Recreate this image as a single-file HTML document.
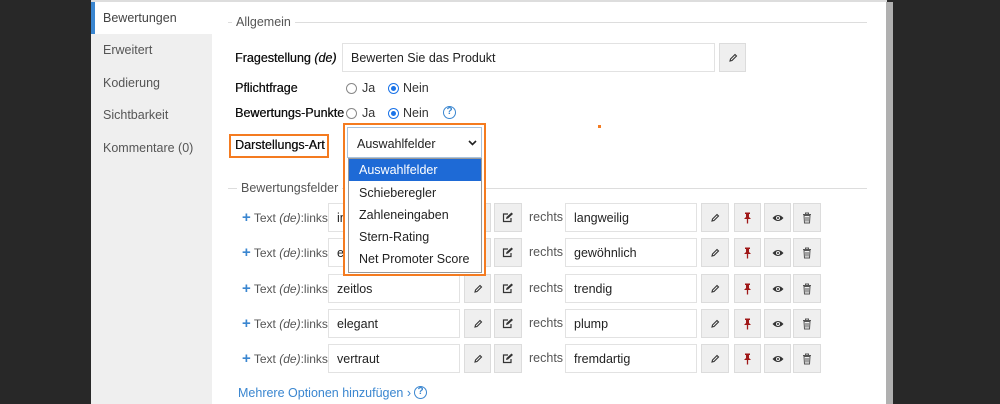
<!DOCTYPE html>
<html><head><meta charset="utf-8"><style>
*{box-sizing:border-box;margin:0;padding:0}
body{width:1000px;height:404px;background:#282828;position:relative;overflow:hidden;font-family:"Liberation Sans",sans-serif;font-size:12.5px;color:#333}
.a{position:absolute}
.t{position:absolute;white-space:nowrap;line-height:16px}
.inp{position:absolute;background:#fff;border:1px solid #e2e2e2;padding-left:8px;line-height:29px;height:29px;white-space:nowrap;color:#222;overflow:hidden}
.btn{position:absolute;background:#efefef;border:1px solid #dcdcdc;height:29px;display:flex;align-items:center;justify-content:center}
.side{position:absolute;left:103px;color:#555;font-size:12.5px}
.lg{position:absolute;color:#555;background:#fff;padding:0 4px;line-height:16px}
.radio{position:absolute;width:11px;height:11px;border:1px solid #888;border-radius:50%;background:#fff}
.radio.on{border:1px solid #1a73e8}
.radio.on::after{content:"";position:absolute;left:2px;top:2px;width:5px;height:5px;border-radius:50%;background:#1a73e8}
.help{position:absolute;width:13px;height:13px;border:1.5px solid #3a86d0;border-radius:50%;color:#3a86d0;font-size:10px;font-weight:bold;line-height:10px;text-align:center}
.opt{position:absolute;left:349px;width:132px;height:22px;line-height:22px;padding-left:10px;color:#222}
.row{position:absolute;left:0;width:1000px;height:29px}
.row .lbl{position:absolute;left:242px;top:7px;white-space:nowrap;color:#555;line-height:16px;font-size:12px}
.row .lbl b{color:#3a86d0;font-size:15px}
.lab{color:#111;font-size:12.5px;text-shadow:0.3px 0 0 #111}
</style></head><body>
<div class="a" style="left:91px;top:2px;width:796px;height:402px;background:#fff"></div>
<div class="a" style="left:91px;top:0;width:796px;height:2px;background:#ddd"></div>
<div class="a" style="left:886px;top:2px;width:7px;height:402px;background:#b0b0b0"></div>
<div class="a" style="left:91px;top:34px;width:121px;height:370px;background:#efefef"></div>
<div class="a" style="left:91px;top:2px;width:4px;height:32px;background:#3a86d0"></div>
<div class="side t" style="top:10px;color:#444">Bewertungen</div>
<div class="side t" style="top:42px">Erweitert</div>
<div class="side t" style="top:75px">Kodierung</div>
<div class="side t" style="top:107px">Sichtbarkeit</div>
<div class="side t" style="top:140px">Kommentare (0)</div>

<div class="a" style="left:228px;top:22px;width:639px;height:1px;background:#ddd"></div>
<div class="lg" style="left:232px;top:14px">Allgemein</div>

<div class="t lab" style="left:235px;top:50px">Fragestellung <i>(de)</i></div>
<div class="inp" style="left:342px;top:43px;width:373px">Bewerten Sie das Produkt</div>
<div class="btn" style="left:719px;top:43px;width:27px">
<svg width="10" height="10" viewBox="0 0 10 10"><path d="M2 8 L2.5 6 L7 1.5 L8.5 3 L4 7.5 Z" fill="none" stroke="#333" stroke-width="1.1"/></svg></div>

<div class="t lab" style="left:235px;top:80px">Pflichtfrage</div>
<div class="radio" style="left:346px;top:83px"></div><div class="t" style="left:362px;top:80px">Ja</div>
<div class="radio on" style="left:388px;top:83px"></div><div class="t" style="left:403px;top:80px">Nein</div>

<div class="t lab" style="left:235px;top:105px">Bewertungs-Punkte</div>
<div class="radio" style="left:346px;top:108px"></div><div class="t" style="left:362px;top:105px">Ja</div>
<div class="radio on" style="left:388px;top:108px"></div><div class="t" style="left:403px;top:105px">Nein</div>
<div class="help" style="left:443px;top:106px">?</div>

<div class="a" style="left:229px;top:134px;width:100px;height:24px;border:2px solid #f47b20"></div>
<div class="t lab" style="left:235px;top:137px">Darstellungs-Art</div>

<div class="a" style="left:598px;top:125px;width:3px;height:3px;background:#f47b20"></div>

<div class="a" style="left:228px;top:188px;width:639px;height:1px;background:#ddd"></div>
<div class="lg" style="left:237px;top:180px">Bewertungsfelder</div>

<div class="row" style="top:203px">
<div class="lbl"><b>+</b> Text <i>(de)</i>:links</div>
<div class="inp" style="left:328px;top:0;width:132px">interessant</div>
<div class="btn" style="left:464px;top:0;width:27px"><svg width="10" height="10" viewBox="0 0 10 10"><path d="M2 8 L2.5 6 L7 1.5 L8.5 3 L4 7.5 Z" fill="none" stroke="#333" stroke-width="1.1"/></svg></div>
<div class="btn" style="left:494px;top:0;width:28px"><svg width="12" height="11" viewBox="0 0 12 11"><path d="M9 6 V9.5 H1.5 V2 H6" fill="none" stroke="#333" stroke-width="1.2"/><path d="M4 7 L4.5 5 L9.5 0.5 L11 2 L6 6.5 Z" fill="#333"/></svg></div>
<div class="t" style="left:529px;top:6px;color:#555">rechts</div>
<div class="inp" style="left:565px;top:0;width:132px">langweilig</div>
<div class="btn" style="left:701px;top:0;width:28px"><svg width="10" height="10" viewBox="0 0 10 10"><path d="M2 8 L2.5 6 L7 1.5 L8.5 3 L4 7.5 Z" fill="none" stroke="#333" stroke-width="1.1"/></svg></div>
<div class="btn" style="left:734px;top:0;width:27px"><svg width="9" height="12" viewBox="0 0 9 12"><path d="M2 0.5 H7 V2 H6 V5 L8 7 H1 L3 5 V2 H2 Z" fill="#a01818"/><path d="M4.5 7 V11.5" stroke="#a01818" stroke-width="1.3"/></svg></div>
<div class="btn" style="left:764px;top:0;width:27px"><svg width="12" height="8" viewBox="0 0 12 8"><path d="M0.5 4 Q6 -2 11.5 4 Q6 10 0.5 4 Z" fill="#333"/><circle cx="6" cy="4" r="2" fill="#efefef"/><circle cx="6" cy="4" r="1" fill="#333"/></svg></div>
<div class="btn" style="left:793px;top:0;width:28px"><svg width="10" height="12" viewBox="0 0 10 12"><path d="M1 2.5 H9 M3.5 2.5 V1 H6.5 V2.5 M2 3.5 L2.5 11 H7.5 L8 3.5 Z M4 5 V9.5 M6 5 V9.5" fill="none" stroke="#555" stroke-width="1"/></svg></div>
</div>

<div class="row" style="top:238px">
<div class="lbl"><b>+</b> Text <i>(de)</i>:links</div>
<div class="inp" style="left:328px;top:0;width:132px">extravagant</div>
<div class="btn" style="left:464px;top:0;width:27px"><svg width="10" height="10" viewBox="0 0 10 10"><path d="M2 8 L2.5 6 L7 1.5 L8.5 3 L4 7.5 Z" fill="none" stroke="#333" stroke-width="1.1"/></svg></div>
<div class="btn" style="left:494px;top:0;width:28px"><svg width="12" height="11" viewBox="0 0 12 11"><path d="M9 6 V9.5 H1.5 V2 H6" fill="none" stroke="#333" stroke-width="1.2"/><path d="M4 7 L4.5 5 L9.5 0.5 L11 2 L6 6.5 Z" fill="#333"/></svg></div>
<div class="t" style="left:529px;top:6px;color:#555">rechts</div>
<div class="inp" style="left:565px;top:0;width:132px">gewöhnlich</div>
<div class="btn" style="left:701px;top:0;width:28px"><svg width="10" height="10" viewBox="0 0 10 10"><path d="M2 8 L2.5 6 L7 1.5 L8.5 3 L4 7.5 Z" fill="none" stroke="#333" stroke-width="1.1"/></svg></div>
<div class="btn" style="left:734px;top:0;width:27px"><svg width="9" height="12" viewBox="0 0 9 12"><path d="M2 0.5 H7 V2 H6 V5 L8 7 H1 L3 5 V2 H2 Z" fill="#a01818"/><path d="M4.5 7 V11.5" stroke="#a01818" stroke-width="1.3"/></svg></div>
<div class="btn" style="left:764px;top:0;width:27px"><svg width="12" height="8" viewBox="0 0 12 8"><path d="M0.5 4 Q6 -2 11.5 4 Q6 10 0.5 4 Z" fill="#333"/><circle cx="6" cy="4" r="2" fill="#efefef"/><circle cx="6" cy="4" r="1" fill="#333"/></svg></div>
<div class="btn" style="left:793px;top:0;width:28px"><svg width="10" height="12" viewBox="0 0 10 12"><path d="M1 2.5 H9 M3.5 2.5 V1 H6.5 V2.5 M2 3.5 L2.5 11 H7.5 L8 3.5 Z M4 5 V9.5 M6 5 V9.5" fill="none" stroke="#555" stroke-width="1"/></svg></div>
</div>

<div class="row" style="top:274px">
<div class="lbl"><b>+</b> Text <i>(de)</i>:links</div>
<div class="inp" style="left:328px;top:0;width:132px">zeitlos</div>
<div class="btn" style="left:464px;top:0;width:27px"><svg width="10" height="10" viewBox="0 0 10 10"><path d="M2 8 L2.5 6 L7 1.5 L8.5 3 L4 7.5 Z" fill="none" stroke="#333" stroke-width="1.1"/></svg></div>
<div class="btn" style="left:494px;top:0;width:28px"><svg width="12" height="11" viewBox="0 0 12 11"><path d="M9 6 V9.5 H1.5 V2 H6" fill="none" stroke="#333" stroke-width="1.2"/><path d="M4 7 L4.5 5 L9.5 0.5 L11 2 L6 6.5 Z" fill="#333"/></svg></div>
<div class="t" style="left:529px;top:6px;color:#555">rechts</div>
<div class="inp" style="left:565px;top:0;width:132px">trendig</div>
<div class="btn" style="left:701px;top:0;width:28px"><svg width="10" height="10" viewBox="0 0 10 10"><path d="M2 8 L2.5 6 L7 1.5 L8.5 3 L4 7.5 Z" fill="none" stroke="#333" stroke-width="1.1"/></svg></div>
<div class="btn" style="left:734px;top:0;width:27px"><svg width="9" height="12" viewBox="0 0 9 12"><path d="M2 0.5 H7 V2 H6 V5 L8 7 H1 L3 5 V2 H2 Z" fill="#a01818"/><path d="M4.5 7 V11.5" stroke="#a01818" stroke-width="1.3"/></svg></div>
<div class="btn" style="left:764px;top:0;width:27px"><svg width="12" height="8" viewBox="0 0 12 8"><path d="M0.5 4 Q6 -2 11.5 4 Q6 10 0.5 4 Z" fill="#333"/><circle cx="6" cy="4" r="2" fill="#efefef"/><circle cx="6" cy="4" r="1" fill="#333"/></svg></div>
<div class="btn" style="left:793px;top:0;width:28px"><svg width="10" height="12" viewBox="0 0 10 12"><path d="M1 2.5 H9 M3.5 2.5 V1 H6.5 V2.5 M2 3.5 L2.5 11 H7.5 L8 3.5 Z M4 5 V9.5 M6 5 V9.5" fill="none" stroke="#555" stroke-width="1"/></svg></div>
</div>

<div class="row" style="top:309px">
<div class="lbl"><b>+</b> Text <i>(de)</i>:links</div>
<div class="inp" style="left:328px;top:0;width:132px">elegant</div>
<div class="btn" style="left:464px;top:0;width:27px"><svg width="10" height="10" viewBox="0 0 10 10"><path d="M2 8 L2.5 6 L7 1.5 L8.5 3 L4 7.5 Z" fill="none" stroke="#333" stroke-width="1.1"/></svg></div>
<div class="btn" style="left:494px;top:0;width:28px"><svg width="12" height="11" viewBox="0 0 12 11"><path d="M9 6 V9.5 H1.5 V2 H6" fill="none" stroke="#333" stroke-width="1.2"/><path d="M4 7 L4.5 5 L9.5 0.5 L11 2 L6 6.5 Z" fill="#333"/></svg></div>
<div class="t" style="left:529px;top:6px;color:#555">rechts</div>
<div class="inp" style="left:565px;top:0;width:132px">plump</div>
<div class="btn" style="left:701px;top:0;width:28px"><svg width="10" height="10" viewBox="0 0 10 10"><path d="M2 8 L2.5 6 L7 1.5 L8.5 3 L4 7.5 Z" fill="none" stroke="#333" stroke-width="1.1"/></svg></div>
<div class="btn" style="left:734px;top:0;width:27px"><svg width="9" height="12" viewBox="0 0 9 12"><path d="M2 0.5 H7 V2 H6 V5 L8 7 H1 L3 5 V2 H2 Z" fill="#a01818"/><path d="M4.5 7 V11.5" stroke="#a01818" stroke-width="1.3"/></svg></div>
<div class="btn" style="left:764px;top:0;width:27px"><svg width="12" height="8" viewBox="0 0 12 8"><path d="M0.5 4 Q6 -2 11.5 4 Q6 10 0.5 4 Z" fill="#333"/><circle cx="6" cy="4" r="2" fill="#efefef"/><circle cx="6" cy="4" r="1" fill="#333"/></svg></div>
<div class="btn" style="left:793px;top:0;width:28px"><svg width="10" height="12" viewBox="0 0 10 12"><path d="M1 2.5 H9 M3.5 2.5 V1 H6.5 V2.5 M2 3.5 L2.5 11 H7.5 L8 3.5 Z M4 5 V9.5 M6 5 V9.5" fill="none" stroke="#555" stroke-width="1"/></svg></div>
</div>

<div class="row" style="top:344px">
<div class="lbl"><b>+</b> Text <i>(de)</i>:links</div>
<div class="inp" style="left:328px;top:0;width:132px">vertraut</div>
<div class="btn" style="left:464px;top:0;width:27px"><svg width="10" height="10" viewBox="0 0 10 10"><path d="M2 8 L2.5 6 L7 1.5 L8.5 3 L4 7.5 Z" fill="none" stroke="#333" stroke-width="1.1"/></svg></div>
<div class="btn" style="left:494px;top:0;width:28px"><svg width="12" height="11" viewBox="0 0 12 11"><path d="M9 6 V9.5 H1.5 V2 H6" fill="none" stroke="#333" stroke-width="1.2"/><path d="M4 7 L4.5 5 L9.5 0.5 L11 2 L6 6.5 Z" fill="#333"/></svg></div>
<div class="t" style="left:529px;top:6px;color:#555">rechts</div>
<div class="inp" style="left:565px;top:0;width:132px">fremdartig</div>
<div class="btn" style="left:701px;top:0;width:28px"><svg width="10" height="10" viewBox="0 0 10 10"><path d="M2 8 L2.5 6 L7 1.5 L8.5 3 L4 7.5 Z" fill="none" stroke="#333" stroke-width="1.1"/></svg></div>
<div class="btn" style="left:734px;top:0;width:27px"><svg width="9" height="12" viewBox="0 0 9 12"><path d="M2 0.5 H7 V2 H6 V5 L8 7 H1 L3 5 V2 H2 Z" fill="#a01818"/><path d="M4.5 7 V11.5" stroke="#a01818" stroke-width="1.3"/></svg></div>
<div class="btn" style="left:764px;top:0;width:27px"><svg width="12" height="8" viewBox="0 0 12 8"><path d="M0.5 4 Q6 -2 11.5 4 Q6 10 0.5 4 Z" fill="#333"/><circle cx="6" cy="4" r="2" fill="#efefef"/><circle cx="6" cy="4" r="1" fill="#333"/></svg></div>
<div class="btn" style="left:793px;top:0;width:28px"><svg width="10" height="12" viewBox="0 0 10 12"><path d="M1 2.5 H9 M3.5 2.5 V1 H6.5 V2.5 M2 3.5 L2.5 11 H7.5 L8 3.5 Z M4 5 V9.5 M6 5 V9.5" fill="none" stroke="#555" stroke-width="1"/></svg></div>
</div>

<div class="t" style="left:238px;top:385px;color:#3a86d0">Mehrere Optionen hinzufügen ›</div>
<div class="help" style="left:414px;top:386px">?</div>

<div class="a" style="left:343px;top:123px;width:143px;height:153px;border:2px solid #f47b20;background:#fff"></div>
<div class="a" style="left:347px;top:127px;width:135px;height:31px;border:1px solid #a9c3dd;background:#fff"></div>
<div class="t" style="left:357px;top:136px;color:#222">Auswahlfelder</div>
<svg class="a" style="left:468px;top:140px" width="9" height="6" viewBox="0 0 9 6"><path d="M1 1 L4.5 4.5 L8 1" fill="none" stroke="#222" stroke-width="1.6"/></svg>
<div class="a" style="left:348px;top:158px;width:134px;height:115px;border:1px solid #999;background:#fff"></div>
<div class="opt" style="top:159px;background:#1e6ad6;color:#fff">Auswahlfelder</div>
<div class="opt" style="top:182px">Schieberegler</div>
<div class="opt" style="top:204px">Zahleneingaben</div>
<div class="opt" style="top:226px">Stern-Rating</div>
<div class="opt" style="top:248px">Net Promoter Score</div>
</body></html>
